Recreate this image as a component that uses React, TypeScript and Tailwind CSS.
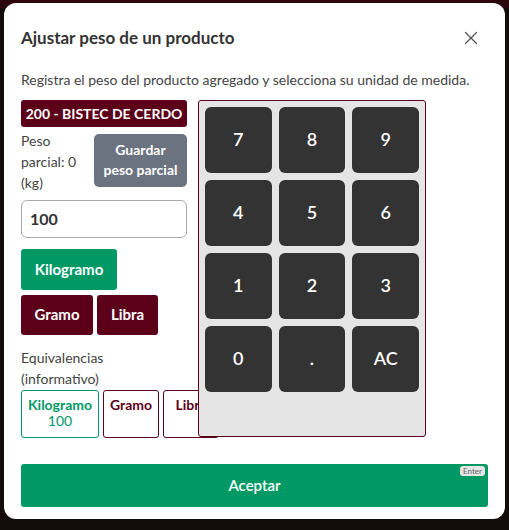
import { X } from "lucide-react";

const keys = ["7", "8", "9", "4", "5", "6", "1", "2", "3", "0", ".", "AC"];

export default function App() {
  return (
    <main
      className="w-[509px] h-[530px] overflow-hidden bg-[#140b0b] flex flex-col"
      style={{ fontFamily: "Lato, 'Noto Sans', sans-serif" }}
    >
      <div className="h-[8px] bg-[#2c0710] shrink-0" />
      <div className="flex-1 px-[4px] pb-[11px] -mt-[5px]">
        <div className="bg-white rounded-[12px] h-full flex flex-col px-[17px]">
          {/* Header */}
          <div className="flex items-center justify-between pt-[22px]">
            <h2 className="text-[17px] font-bold text-[#333]">Ajustar peso de un producto</h2>
            <X className="w-[22px] h-[22px] text-[#555] mr-[6px]" strokeWidth={1.4} />
          </div>
          <p className="text-[14px] text-[#444] mt-[18px]">
            Registra el peso del producto agregado y selecciona su unidad de medida.
          </p>

          <div className="flex gap-[11px] mt-[10px]">
            {/* Left column */}
            <div className="w-[166px] shrink-0 flex flex-col">
              <div className="h-[27px] rounded-[3px] bg-[#5c0019] text-white text-[14px] font-bold flex items-center justify-center">
                200 - BISTEC DE CERDO
              </div>
              <div className="flex justify-between items-start mt-[3px]">
                <p className="w-[70px] text-[14px] leading-[21px] text-[#444]">Peso parcial: 0 (kg)</p>
                <button className="mt-[4px] w-[93px] h-[53px] rounded-[5px] bg-[#6b7280] text-white text-[14px] font-bold leading-[20px]">
                  Guardar
                  <br />
                  peso parcial
                </button>
              </div>
              <input
                defaultValue="100"
                className="mt-[7px] h-[38px] w-full rounded-[6px] border border-[#aaa] px-[8px] text-[16px] font-bold text-[#333] outline-none"
              />
              <div className="mt-[11px]">
                <button className="h-[41px] w-[96px] rounded-[3px] bg-[#009966] text-white text-[15px] font-bold">
                  Kilogramo
                </button>
              </div>
              <div className="flex gap-[4px] mt-[5px]">
                <button className="h-[40px] w-[72px] rounded-[3px] bg-[#5c0019] text-white text-[15px] font-bold">
                  Gramo
                </button>
                <button className="h-[40px] w-[61px] rounded-[3px] bg-[#5c0019] text-white text-[15px] font-bold">
                  Libra
                </button>
              </div>
              <p className="mt-[12px] text-[14px] leading-[21px] text-[#444]">
                Equivalencias
                <br />
                (informativo)
              </p>
              <div className="flex gap-[4px] mt-[1px] whitespace-nowrap">
                <div className="w-[78px] h-[48px] shrink-0 rounded-[3px] border border-[#009966] text-[#009966] text-[14px] leading-[16px] flex flex-col items-center pt-[6px]">
                  <span className="font-bold">Kilogramo</span>
                  <span>100</span>
                </div>
                <div className="w-[56px] h-[48px] shrink-0 rounded-[3px] border border-[#5c0019] text-[#5c0019] text-[14px] leading-[16px] font-bold flex flex-col items-center pt-[6px]">
                  Gramo
                </div>
                <div className="w-[56px] h-[48px] shrink-0 rounded-[3px] border border-[#5c0019] text-[#5c0019] text-[14px] leading-[16px] font-bold flex flex-col items-center pt-[6px]">
                  Libra
                </div>
              </div>
            </div>

            {/* Keypad */}
            <div className="relative w-[228px] h-[337px] bg-[#e5e5e5] border border-[#5c0019] rounded-[3px] p-[6px]">
              <div className="grid grid-cols-3 gap-x-[7px] gap-y-[7px]">
                {keys.map((k) => (
                  <button
                    key={k}
                    className="h-[66px] rounded-[6px] bg-[#333] text-white text-[18px] font-semibold"
                  >
                    {k}
                  </button>
                ))}
              </div>
            </div>
          </div>

          {/* Footer */}
          <div className="mt-[26px] relative">
            <button className="w-full h-[43px] rounded-[3px] bg-[#009966] text-white text-[15px] font-semibold">
              Aceptar
            </button>
            <span className="absolute top-[2px] right-[3px] rounded-[3px] bg-[#e5e5e5] text-[#666] text-[8px] leading-[10px] px-[3px]">
              Enter
            </span>
          </div>
        </div>
      </div>
    </main>
  );
}
